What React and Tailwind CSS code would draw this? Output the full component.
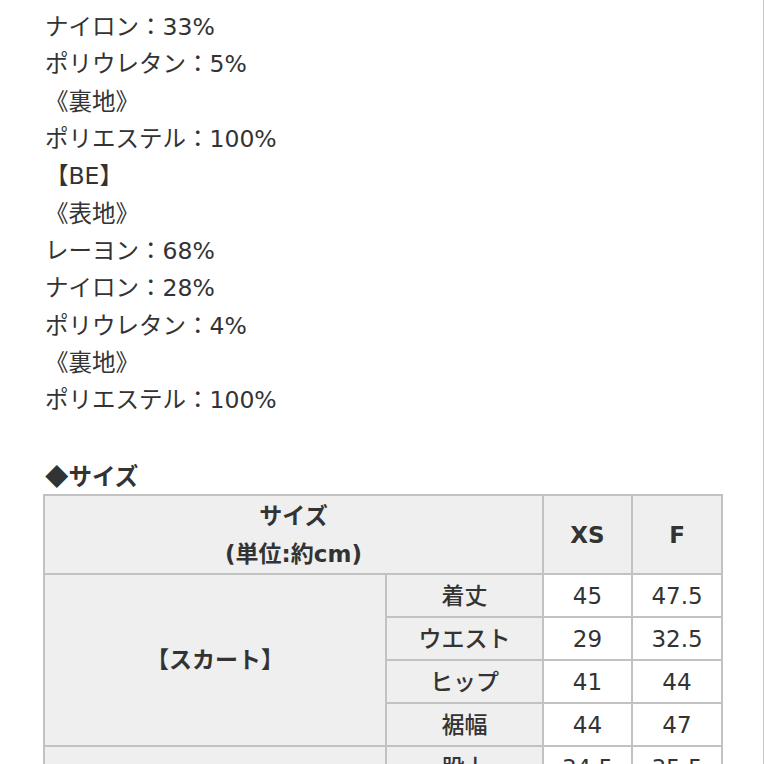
export default function App() {
  const font = { fontFamily: '"DejaVu Sans", "Noto Sans CJK JP", sans-serif' };
  const lines = [
    "レーヨン：62%",
    "ナイロン：33%",
    "ポリウレタン：5%",
    "《裏地》",
    "ポリエステル：100%",
    "【BE】",
    "《表地》",
    "レーヨン：68%",
    "ナイロン：28%",
    "ポリウレタン：4%",
    "《裏地》",
    "ポリエステル：100%",
    "\u00a0",
  ];
  const rows = [
    ["着丈", "45", "47.5"],
    ["ウエスト", "29", "32.5"],
    ["ヒップ", "41", "44"],
    ["裾幅", "44", "47"],
  ];
  return (
    <div
      className="w-[764px] h-[764px] overflow-hidden bg-white border-r border-[#c4c4c4] text-[#333333]"
      style={font}
    >
      <div className="pl-[43px]">
        <div className="mt-[-28.5px] pl-[2px] text-[23.5px] leading-[37.35px]">
          {lines.map((l, i) => (
            <div key={i} className="whitespace-pre">{l}</div>
          ))}
          <div className="h-[37.35px] font-bold">
            <span className="font-[Noto_Sans_CJK_JP]">◆</span>サイズ
          </div>
        </div>
        <div className="grid w-[680px] grid-cols-[340px_155px_87px_88px] grid-rows-[77px_41px_41px_41px_41px_41px] gap-[2px] bg-[#c2c2c2] p-[2px] text-[23px]">
          <div className="col-span-2 flex flex-col items-center justify-center bg-[#efefef] font-bold leading-[38px]">
            <div>サイズ</div>
            <div>(単位:約cm)</div>
          </div>
          <div className="flex items-center justify-center bg-[#efefef] font-bold">XS</div>
          <div className="flex items-center justify-center bg-[#efefef] font-bold">F</div>
          <div className="row-span-4 flex items-center justify-center bg-[#efefef] font-semibold">
            【スカート】
          </div>
          {rows.map((r, i) => (
            <Row key={i} r={r} />
          ))}
          <div className="bg-[#efefef]" />
          <Row r={["股上", "34.5", "35.5"]} />
        </div>
      </div>
    </div>
  );
}

function Row({ r }) {
  return (
    <>
      <div className="flex items-center justify-center bg-[#efefef] font-medium">{r[0]}</div>
      <div className="flex items-center justify-center bg-white">{r[1]}</div>
      <div className="flex items-center justify-center bg-white">{r[2]}</div>
    </>
  );
}
